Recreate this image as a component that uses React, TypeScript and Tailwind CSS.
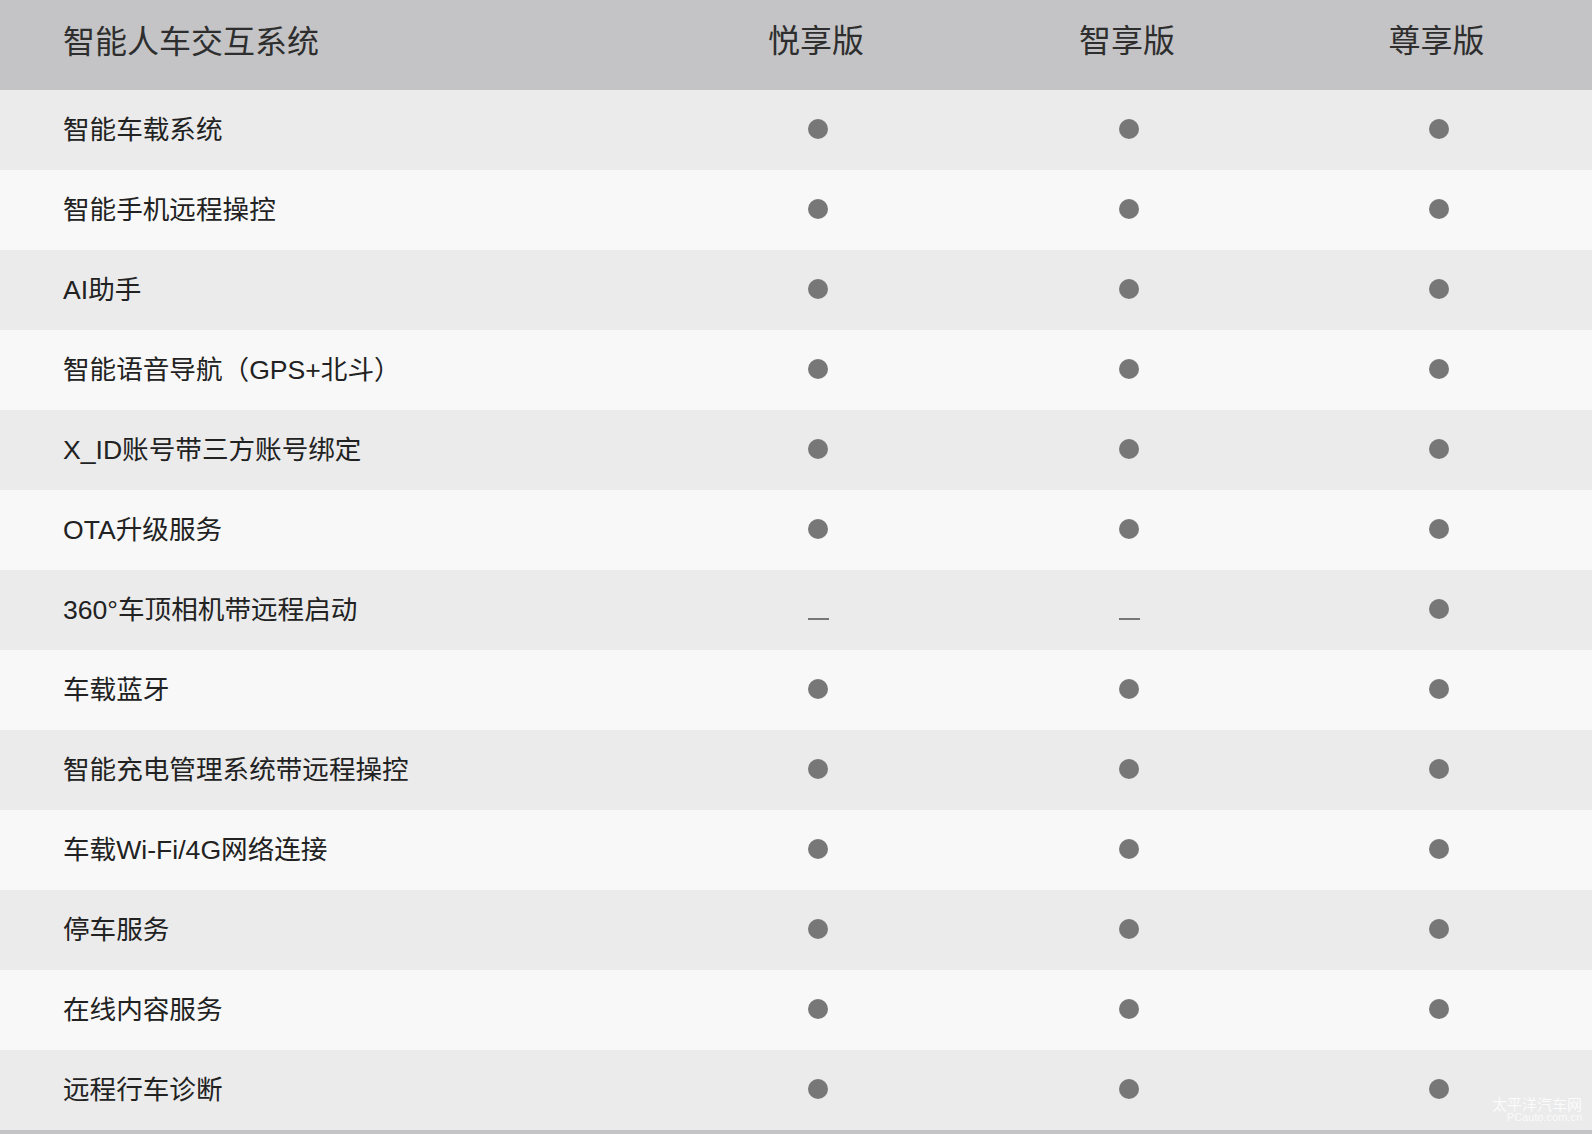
import React from 'react';

interface Feature {
  name: string;
  values: boolean[];
}

const features: Feature[] = [
  { name: '智能车载系统', values: [true, true, true] },
  { name: '智能手机远程操控', values: [true, true, true] },
  { name: 'AI助手', values: [true, true, true] },
  { name: '智能语音导航（GPS+北斗）', values: [true, true, true] },
  { name: 'X_ID账号带三方账号绑定', values: [true, true, true] },
  { name: 'OTA升级服务', values: [true, true, true] },
  { name: '360°车顶相机带远程启动', values: [false, false, true] },
  { name: '车载蓝牙', values: [true, true, true] },
  { name: '智能充电管理系统带远程操控', values: [true, true, true] },
  { name: '车载Wi-Fi/4G网络连接', values: [true, true, true] },
  { name: '停车服务', values: [true, true, true] },
  { name: '在线内容服务', values: [true, true, true] },
  { name: '远程行车诊断', values: [true, true, true] },
];

const versions = ['悦享版', '智享版', '尊享版'];

const Cell: React.FC<{ on: boolean }> = ({ on }) => (
  <div className="flex items-center justify-center pb-[2px]">
    {on ? (
      <span className="block w-[20px] h-[20px] rounded-full bg-[#777777]" />
    ) : (
      <span className="block w-[21px] h-[2px] bg-[#777777] mt-[19px]" />
    )}
  </div>
);

const App: React.FC = () => {
  return (
    <div
      className="w-[1592px] h-[1134px] bg-[#c4c4c6] overflow-hidden"
      style={{ fontFamily: '"Liberation Sans", "Noto Sans CJK SC", sans-serif' }}
    >
      <div className="grid grid-cols-[663px_310px_312px_307px] h-[90px] bg-[#c4c4c6] text-[#2e2e2e] text-[32px]">
        <div className="flex items-center pl-[63px] pb-[7px]">智能人车交互系统</div>
        {versions.map((v) => (
          <div key={v} className="flex items-center justify-center pb-[8px] pr-[4px]">
            {v}
          </div>
        ))}
      </div>

      {features.map((f, i) => (
        <div
          key={f.name}
          className={`grid grid-cols-[663px_310px_312px_307px] h-[80px] ${
            i % 2 === 0 ? 'bg-[#ebebeb]' : 'bg-[#f8f8f8]'
          }`}
        >
          <div className="flex items-center pl-[63px] pt-[2px] text-[26.6px] text-[#222222]">{f.name}</div>
          {f.values.map((v, j) => (
            <Cell key={j} on={v} />
          ))}
        </div>
      ))}

      <div className="relative">
        <div className="absolute right-[10px] bottom-[7px] text-right leading-none text-[#ffffff] opacity-80">
          <div className="text-[15px]">太平洋汽车网</div>
          <div className="text-[11px]">PCauto.com.cn</div>
        </div>
      </div>
    </div>
  );
};

export default App;
